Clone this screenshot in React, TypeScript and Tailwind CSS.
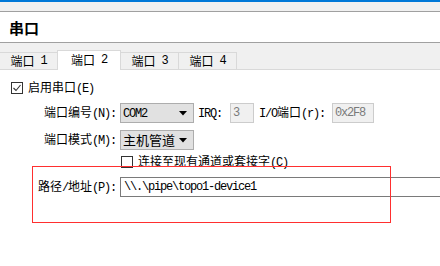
import React from "react";

// ascii runs get a narrow mono face so they sit at half the CJK width, like the dialog font
function Mx({ s }: { s: string }) {
  const parts = s.split(/([\x20-\x7e]+)/);
  return (
    <>
      {parts.map((p, i) =>
        /^[\x20-\x7e]+$/.test(p) ? (
          <span key={i} className="font-['Liberation_Mono'] text-[12px] tracking-[-1.2px] whitespace-pre">
            {p}
          </span>
        ) : (
          <React.Fragment key={i}>{p}</React.Fragment>
        )
      )}
    </>
  );
}

function CheckBox({ checked }: { checked?: boolean }) {
  return (
    <div className="w-[12px] h-[12px] border border-[#333333] bg-white flex items-center justify-center shrink-0">
      {checked && (
        <svg width="10" height="10" viewBox="0 0 10 10">
          <path d="M1.5 5 L4 7.5 L8.5 2" fill="none" stroke="#333333" strokeWidth="1.1" />
        </svg>
      )}
    </div>
  );
}

function Combo({ text, big }: { text: string; big?: boolean }) {
  return (
    <div className="w-[74px] h-[20px] border border-[#adadad] bg-[#e1e1e1] flex items-center pl-[2px] pr-[6px] shrink-0">
      <span className={big ? "flex-1 text-[13px] leading-[16px]" : "flex-1 leading-[16px]"}>
        <Mx s={text} />
      </span>
      <svg width="8" height="5" viewBox="0 0 8 5">
        <path d="M0 0 H8 L4 4.5 Z" fill="#000" />
      </svg>
    </div>
  );
}

function Field({ text, w }: { text: string; w: string }) {
  return (
    <div className={`${w} h-[20px] border border-[#cccccc] bg-[#f0f0f0] flex items-center pl-[2px] text-[#7a7a7a] shrink-0`}>
      <Mx s={text} />
    </div>
  );
}

export default function App() {
  const tabs = ["端口 1", "端口 2", "端口 3", "端口 4"];
  return (
    <div className="w-[440px] h-[266px] bg-white relative overflow-hidden text-[12px] text-black font-['Noto_Sans_CJK_SC',sans-serif]">
      <div className="h-[2px] bg-[#0078d7]" />
      <div className="h-[10px] bg-[#f0f0f0] border-b border-[#a0a0a0]" />
      <div className="h-[31px] border-b border-[#a0a0a0] flex items-center pl-[9px]">
        <span className="text-[15px] font-bold leading-[18px] mt-[2px]">串口</span>
      </div>

      {/* tab strip */}
      <div className="h-[27px] bg-[#f0f0f0] border-b border-[#d9d9d9] flex items-end">
        {tabs.map((t, i) =>
          i === 1 ? (
            <div
              key={t}
              className="-ml-px w-[64px] h-[20px] -mb-px bg-white border border-b-0 border-[#d9d9d9] flex items-center justify-center leading-[14px] pb-[2px] relative z-10"
            >
              <Mx s={t} />
            </div>
          ) : (
            <div
              key={t}
              className="-ml-px w-[59px] h-[17px] border border-b-0 border-[#d9d9d9] flex items-center justify-center leading-[14px]"
            >
              <Mx s={t} />
            </div>
          )
        )}
      </div>

      {/* page */}
      <div className="flex flex-col">
        <div className="mt-[10px] h-[16px] flex items-center pl-[11px]">
          <CheckBox checked />
          <span className="ml-[5px] leading-[14px]">
            <Mx s="启用串口(E)" />
          </span>
        </div>

        <div className="mt-[7px] h-[20px] flex items-center">
          <span className="w-[116px] text-right leading-[14px]">
            <Mx s="端口编号(N):" />
          </span>
          <div className="ml-[4px]">
            <Combo text="COM2" />
          </div>
          <span className="ml-[4px] leading-[14px]">
            <Mx s="IRQ:" />
          </span>
          <div className="ml-[8px]">
            <Field text="3" w="w-[24px]" />
          </div>
          <span className="ml-[5px] leading-[14px]">
            <Mx s="I/O端口(r):" />
          </span>
          <div className="ml-[7px]">
            <Field text="0x2F8" w="w-[42px]" />
          </div>
        </div>

        <div className="mt-[7px] h-[20px] flex items-center">
          <span className="w-[116px] text-right leading-[14px]">
            <Mx s="端口模式(M):" />
          </span>
          <div className="ml-[4px]">
            <Combo text="主机管道" big />
          </div>
        </div>

        <div className="mt-[5px] h-[14px] flex items-center pl-[121px]">
          <CheckBox />
          <span className="ml-[5px] leading-[14px]">
            <Mx s="连接至现有通道或套接字(C)" />
          </span>
        </div>

        <div className="mt-[8px] h-[20px] flex items-center">
          <span className="w-[116px] text-right leading-[14px]">
            <Mx s="路径/地址(P):" />
          </span>
          <div className="ml-[4px] flex-1 h-[20px] border border-r-0 border-[#7a7a7a] bg-white flex items-center pl-[3px]">
            <Mx s={"\\\\.\\pipe\\topo1-device1"} />
          </div>
        </div>
      </div>

      {/* red annotation box */}
      <div className="absolute left-[32px] top-[166px] w-[359px] h-[57px] border border-[#ff2f2f] pointer-events-none" />
    </div>
  );
}
